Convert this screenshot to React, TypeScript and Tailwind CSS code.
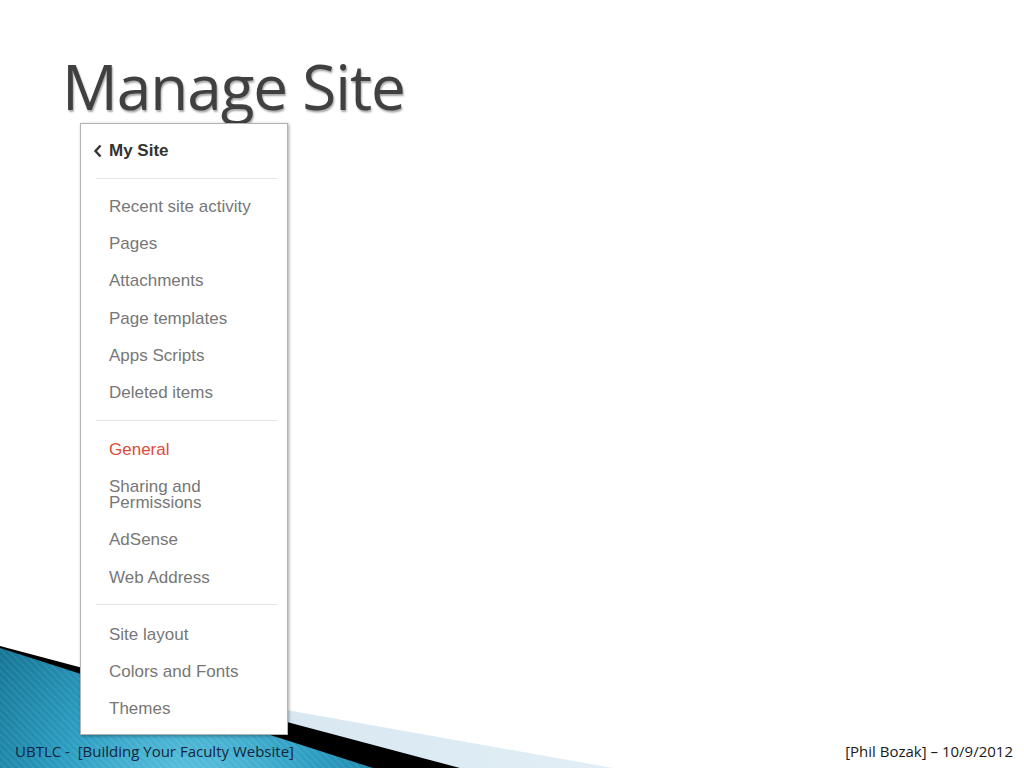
import React from "react";

const groups: { label: string; active?: boolean; wrap?: boolean }[][] = [
  [
    { label: "Recent site activity" },
    { label: "Pages" },
    { label: "Attachments" },
    { label: "Page templates" },
    { label: "Apps Scripts" },
    { label: "Deleted items" },
  ],
  [
    { label: "General", active: true },
    { label: "Sharing and Permissions", wrap: true },
    { label: "AdSense" },
    { label: "Web Address" },
  ],
  [{ label: "Site layout" }, { label: "Colors and Fonts" }, { label: "Themes" }],
];

function SlideBackdrop() {
  // Slide theme decoration: teal striped wedge, black band, pale blue band
  return (
    <svg className="absolute inset-0" width="1024" height="768" viewBox="0 0 1024 768">
      <defs>
        <radialGradient id="teal" cx="190" cy="800" r="300" gradientUnits="userSpaceOnUse">
          <stop offset="0" stopColor="#63c6e2" />
          <stop offset="0.45" stopColor="#2a9cc0" />
          <stop offset="1" stopColor="#0a5f7c" />
        </radialGradient>
        <linearGradient id="pale" x1="0" y1="0" x2="1" y2="0">
          <stop offset="0" stopColor="#cfe2ee" />
          <stop offset="1" stopColor="#e2eef5" />
        </linearGradient>
        <pattern id="stripes" width="5" height="5" patternUnits="userSpaceOnUse" patternTransform="rotate(-45)">
          <rect width="2" height="5" fill="#ffffff" fillOpacity="0.07" />
        </pattern>
      </defs>
      <polygon points="0,659 613,768 0,768" fill="url(#pale)" />
      <polygon points="0,646 460,768 0,768" fill="#000" />
      <polygon points="0,648 373,768 0,768" fill="url(#teal)" />
      <polygon points="0,648 373,768 0,768" fill="url(#stripes)" />
    </svg>
  );
}

function SiteMenu() {
  return (
    <div className="ml-[80px] mt-[4px] w-[208px] border border-[#b3b3b3] bg-white shadow-[1px_1px_3px_rgba(0,0,0,0.35)] font-['Liberation_Sans',Arial,sans-serif] text-[17px]">
      <div className="flex items-center pt-[18px] pb-[19px] pl-[12px] leading-[17px]">
        <svg width="10" height="14" viewBox="0 0 10 14" className="mr-[6px]">
          <path d="M7.5 1.5 L2.5 7 L7.5 12.5" fill="none" stroke="#333" strokeWidth="2.4" />
        </svg>
        <span className="font-bold text-[#333]">My Site</span>
      </div>
      {groups.map((items, gi) => (
        <div key={gi}>
          <div className="h-px bg-[#e6e6e6] ml-[15px] mr-[10px]" />
          <div className={gi === 0 ? "mt-[9px] mb-[8.8px]" : gi === 1 ? "mt-[10px] mb-[8.8px]" : "mt-[10.4px] mb-[7px]"}>
            {items.map((it) =>
              it.wrap ? (
                <div key={it.label} className="pl-[28px] pr-[30px] py-[10.6px] leading-[16px] text-[#777]">
                  {it.label}
                </div>
              ) : (
                <div
                  key={it.label}
                  className={`flex items-center h-[37.2px] pl-[28px] leading-[17px] ${it.active ? "text-[#dd4b39]" : "text-[#777]"}`}
                >
                  {it.label}
                </div>
              )
            )}
          </div>
        </div>
      ))}
    </div>
  );
}

export default function App() {
  return (
    <div className="relative w-[1024px] h-[768px] bg-white overflow-hidden">
      <SlideBackdrop />
      <div className="relative flex flex-col h-full">
        <h1 className="ml-[62px] mt-[53px] text-[62px] leading-[66px] font-medium tracking-[-1px] text-[#404040] font-['Open_Sans',sans-serif] [text-shadow:1px_2px_2px_rgba(0,0,0,0.35)]">
          Manage Site
        </h1>
        <SiteMenu />
        <div className="flex justify-between mt-[7px] pl-[15px] pr-[11px] text-[15px] leading-[18px] font-['Open_Sans',sans-serif]">
          <span className="text-[#13263d] whitespace-pre">UBTLC -  [Building Your Faculty Website]</span>
          <span className="text-[#1a1a1a]">[Phil Bozak] – 10/9/2012</span>
        </div>
      </div>
    </div>
  );
}
